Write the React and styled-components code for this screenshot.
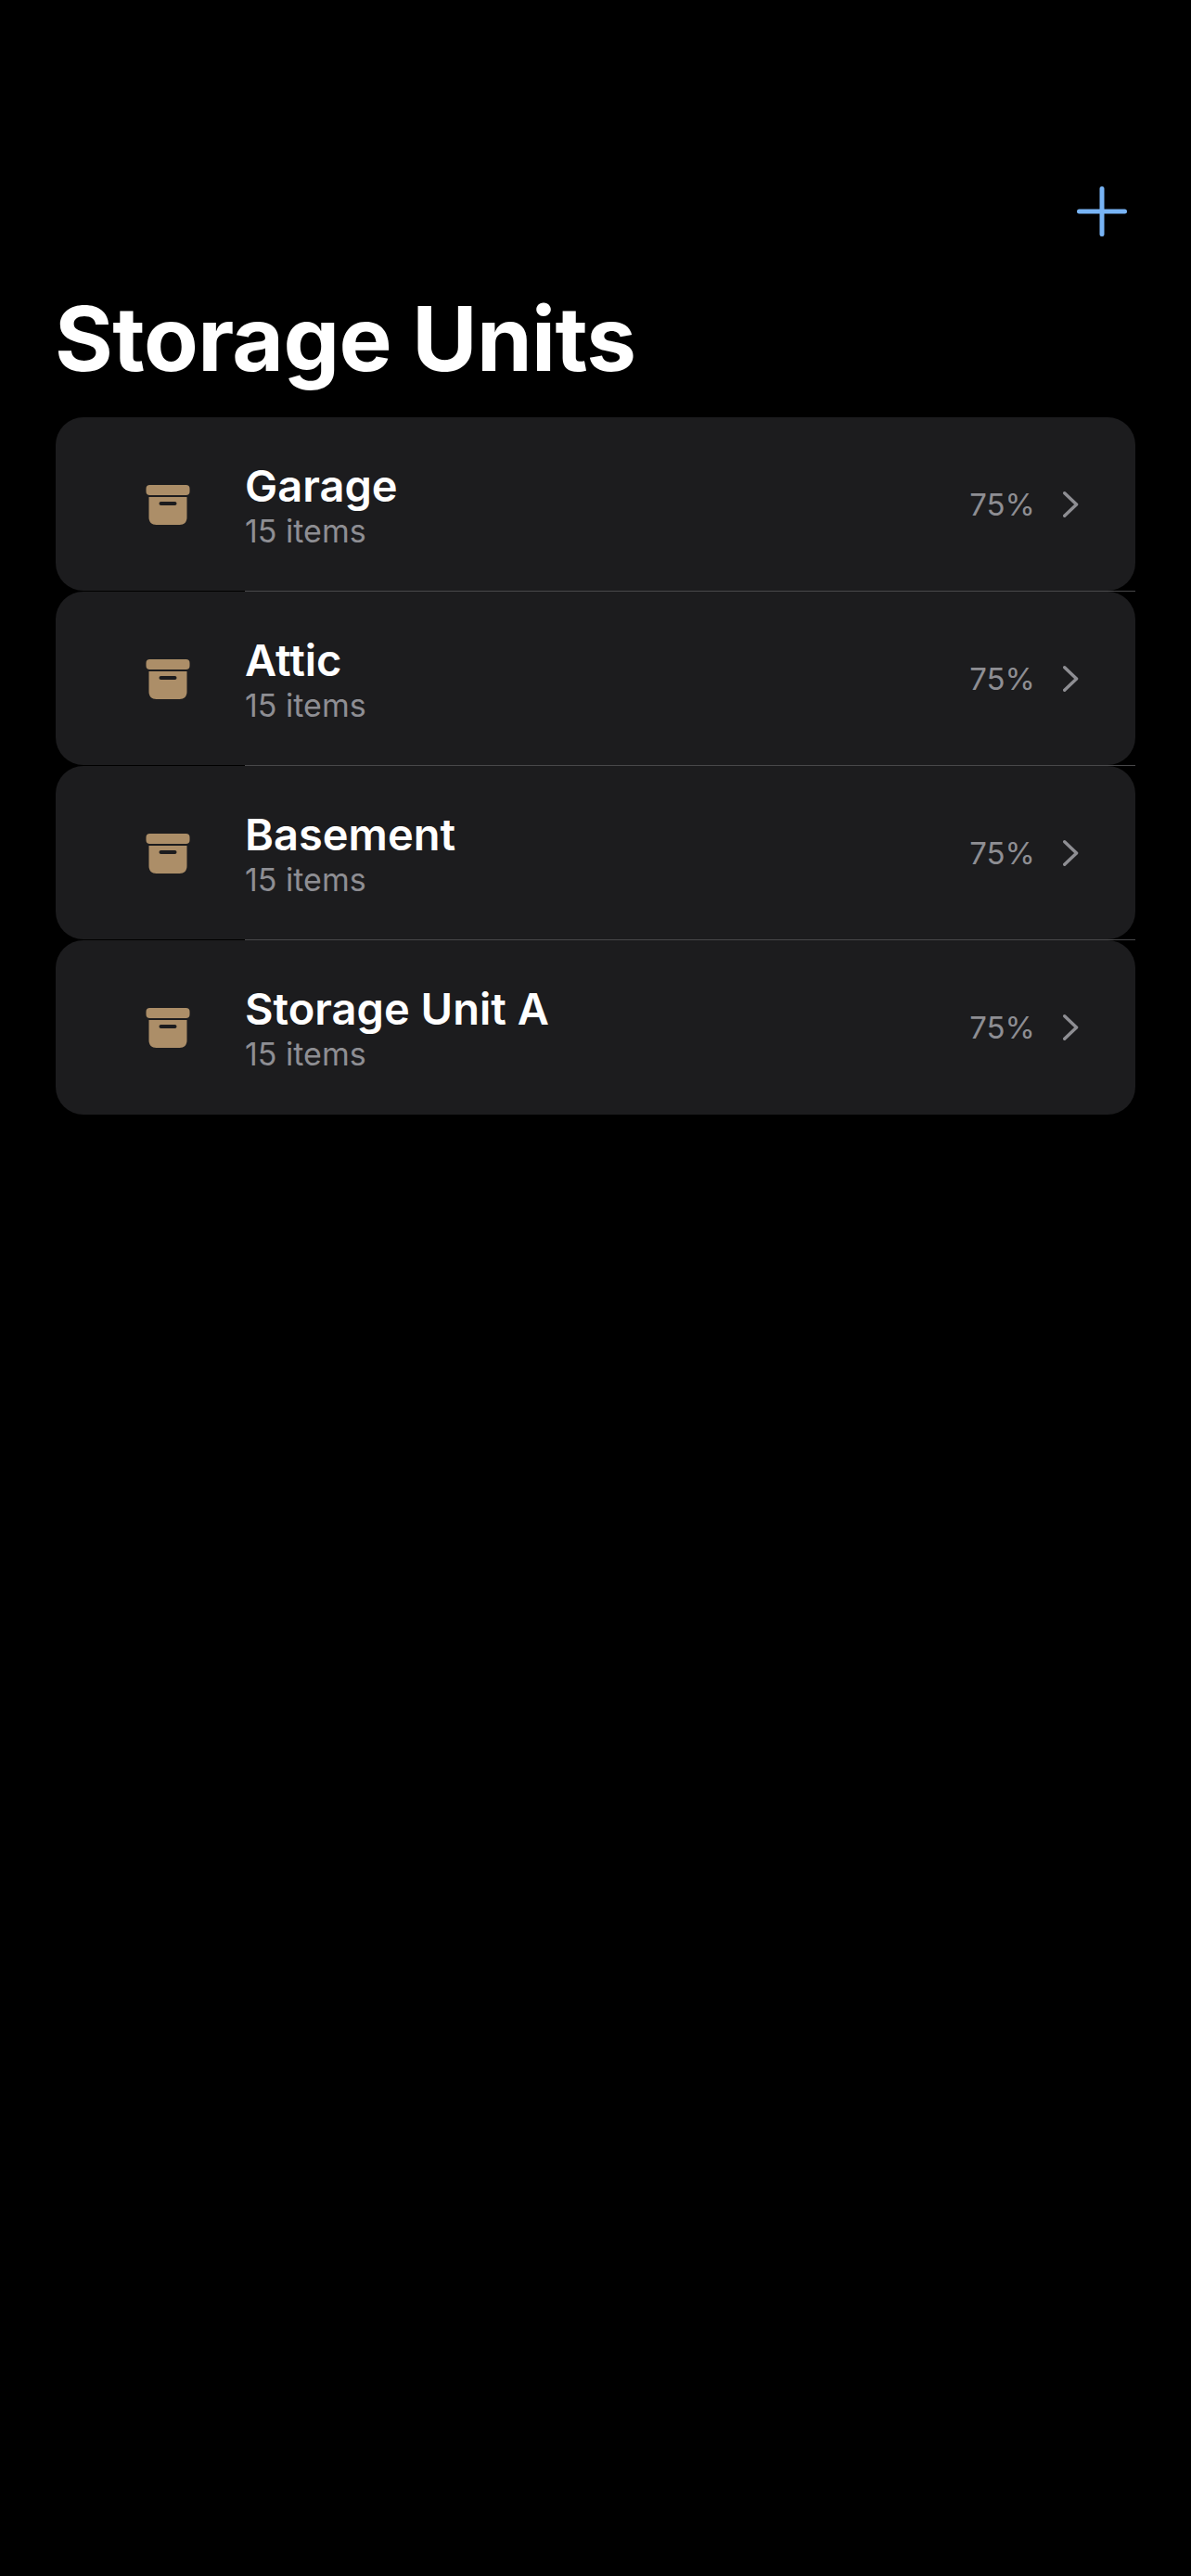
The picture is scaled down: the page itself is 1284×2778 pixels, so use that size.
import React from 'react';
import styled, { createGlobalStyle } from 'styled-components';

const GlobalStyle = createGlobalStyle`
  html, body {
    margin: 0;
    padding: 0;
    background: #000;
    font-family: 'Inter', 'Liberation Sans', sans-serif;
  }
`;

const units = [
  { name: 'Garage', count: '15 items', percent: '75%' },
  { name: 'Attic', count: '15 items', percent: '75%' },
  { name: 'Basement', count: '15 items', percent: '75%' },
  { name: 'Storage Unit A', count: '15 items', percent: '75%' },
];

const ArchiveIcon = () => (
  <svg width="48" height="44" viewBox="0 0 48 44" fill="none">
    <rect x="0.5" y="0" width="47" height="11" rx="4" fill="#AC8E68" />
    <path
      d="M3.5 13H44.5V35C44.5 40 41.5 43 36.5 43H11.5C6.5 43 3.5 40 3.5 35V13Z"
      fill="#AC8E68"
    />
    <rect x="14.5" y="18" width="19" height="4" rx="2" fill="#1C1C1E" />
  </svg>
);

const Chevron = () => (
  <svg width="18" height="30" viewBox="0 0 18 30" fill="none">
    <path
      d="M1.7 2.7L14.6 15L1.7 27.3"
      stroke="#8E8E93"
      strokeWidth="3.4"
      strokeLinecap="round"
      strokeLinejoin="round"
    />
  </svg>
);

const PlusIcon = () => (
  <svg width="54" height="54" viewBox="0 0 54 54" fill="none">
    <path
      d="M27 2.5V51.5M2.5 27H51.5"
      stroke="#78B4F5"
      strokeWidth="5"
      strokeLinecap="round"
    />
  </svg>
);

const App = () => {
  return (
    <Page>
      <GlobalStyle />
      <Toolbar>
        <PlusIcon />
      </Toolbar>
      <Title>Storage Units</Title>
      <List>
        {units.map((unit, i) => (
          <React.Fragment key={unit.name}>
            <Card>
              <IconSlot>
                <ArchiveIcon />
              </IconSlot>
              <Info>
                <Name>{unit.name}</Name>
                <Count>{unit.count}</Count>
              </Info>
              <Percent>{unit.percent}</Percent>
              <ChevronSlot>
                <Chevron />
              </ChevronSlot>
            </Card>
            {i < units.length - 1 && <Separator />}
          </React.Fragment>
        ))}
      </List>
    </Page>
  );
};

const Page = styled.div`
  width: 1284px;
  height: 2778px;
  background: #000;
  padding: 201px 60px 0;
  box-sizing: border-box;
  overflow: hidden;
`;

const Toolbar = styled.div`
  display: flex;
  justify-content: flex-end;
  padding-right: 9px;
`;

const Title = styled.h1`
  margin: 51px 0 0 -1px;
  padding-bottom: 6px;
  font-size: 96px;
  line-height: 118px;
  font-weight: 700;
  color: #fff;
  letter-spacing: -0.6px;
`;

const List = styled.div`
  margin-top: 20px;
  display: flex;
  flex-direction: column;
`;

const Card = styled.div`
  height: 187px;
  background: #1c1c1e;
  border-radius: 30px;
  display: flex;
  align-items: center;

  &:last-child {
    height: 188px;
    padding-bottom: 1px;
    box-sizing: border-box;
  }
`;

const Separator = styled.div`
  height: 1px;
  margin-left: 204px;
  background: #48484a;
`;

const IconSlot = styled.div`
  width: 204px;
  flex-shrink: 0;
  display: flex;
  padding: 3px 0 0 97px;
  box-sizing: border-box;
`;

const Info = styled.div`
  flex: 1;
  display: flex;
  flex-direction: column;
  padding-top: 4px;
`;

const Name = styled.div`
  font-size: 47px;
  line-height: 54px;
  font-weight: 600;
  color: #fff;
`;

const Count = styled.div`
  font-size: 34px;
  line-height: 43px;
  font-weight: 400;
  color: #8e8e93;
`;

const Percent = styled.div`
  font-size: 33px;
  font-weight: 400;
  color: #8e8e93;
`;

const ChevronSlot = styled.div`
  display: flex;
  margin-left: 30px;
  margin-right: 60px;
`;

export default App;
